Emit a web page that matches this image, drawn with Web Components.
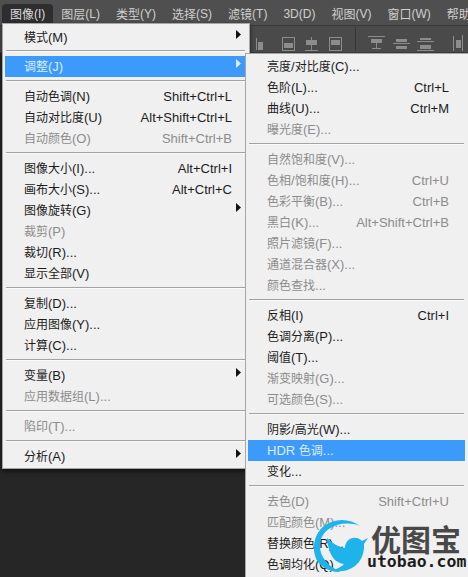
<!DOCTYPE html>
<html lang="zh-CN"><head><meta charset="utf-8"><style>
html,body{margin:0;padding:0;background:#262626;height:577px;overflow:hidden}
</style></head><body>
<ps-app>
<ps-menubar slot="bar"></ps-menubar>
<ps-toolbar slot="tool"></ps-toolbar>
<ps-menu slot="left" kind="left">
<ps-item label="模式(M)" more></ps-item>
<ps-sep short></ps-sep>
<ps-item label="调整(J)" more on></ps-item>
<ps-sep></ps-sep>
<ps-item label="自动色调(N)" key="Shift+Ctrl+L"></ps-item>
<ps-item label="自动对比度(U)" key="Alt+Shift+Ctrl+L"></ps-item>
<ps-item label="自动颜色(O)" key="Shift+Ctrl+B" off></ps-item>
<ps-sep></ps-sep>
<ps-item label="图像大小(I)..." key="Alt+Ctrl+I"></ps-item>
<ps-item label="画布大小(S)..." key="Alt+Ctrl+C"></ps-item>
<ps-item label="图像旋转(G)" more></ps-item>
<ps-item label="裁剪(P)" off></ps-item>
<ps-item label="裁切(R)..."></ps-item>
<ps-item label="显示全部(V)"></ps-item>
<ps-sep></ps-sep>
<ps-item label="复制(D)..."></ps-item>
<ps-item label="应用图像(Y)..."></ps-item>
<ps-item label="计算(C)..."></ps-item>
<ps-sep></ps-sep>
<ps-item label="变量(B)" more></ps-item>
<ps-item label="应用数据组(L)..." off></ps-item>
<ps-sep></ps-sep>
<ps-item label="陷印(T)..." off></ps-item>
<ps-sep></ps-sep>
<ps-item label="分析(A)" more></ps-item>
</ps-menu>
<ps-menu slot="right" kind="right">
<ps-item label="亮度/对比度(C)..."></ps-item>
<ps-item label="色阶(L)..." key="Ctrl+L"></ps-item>
<ps-item label="曲线(U)..." key="Ctrl+M"></ps-item>
<ps-item label="曝光度(E)..." off></ps-item>
<ps-sep></ps-sep>
<ps-item label="自然饱和度(V)..." off></ps-item>
<ps-item label="色相/饱和度(H)..." key="Ctrl+U" off></ps-item>
<ps-item label="色彩平衡(B)..." key="Ctrl+B" off></ps-item>
<ps-item label="黑白(K)..." key="Alt+Shift+Ctrl+B" off></ps-item>
<ps-item label="照片滤镜(F)..." off></ps-item>
<ps-item label="通道混合器(X)..." off></ps-item>
<ps-item label="颜色查找..." off></ps-item>
<ps-sep></ps-sep>
<ps-item label="反相(I)" key="Ctrl+I"></ps-item>
<ps-item label="色调分离(P)..."></ps-item>
<ps-item label="阈值(T)..."></ps-item>
<ps-item label="渐变映射(G)..." off></ps-item>
<ps-item label="可选颜色(S)..." off></ps-item>
<ps-sep></ps-sep>
<ps-item label="阴影/高光(W)..."></ps-item>
<ps-item label="HDR 色调..." on></ps-item>
<ps-item label="变化..."></ps-item>
<ps-sep></ps-sep>
<ps-item label="去色(D)" key="Shift+Ctrl+U" off></ps-item>
<ps-item label="匹配颜色(M)..." off></ps-item>
<ps-item label="替换颜色(R)..."></ps-item>
<ps-item label="色调均化(Q)"></ps-item>
</ps-menu>
<ps-logo slot="logo"></ps-logo>
</ps-app>
<script>
const FONT='"Liberation Sans","Noto Sans CJK SC",sans-serif';
const cjk=s=>s.replace(/[\u3000-\u9fff]+/g,m=>`<span class="c">${m}</span>`);

customElements.define('ps-app',class extends HTMLElement{
  constructor(){super();this.attachShadow({mode:'open'}).innerHTML=`<style>
:host{display:block;position:relative;width:468px;height:577px;overflow:hidden;background:#262626;font-family:${FONT}}
.l{position:absolute;left:2px;top:23px;width:248px}
.r{position:absolute;left:245px;top:53px;width:223px;height:524px;overflow:hidden}
.lg{position:absolute;left:312px;top:516px}
</style><slot name="bar"></slot><slot name="tool"></slot>
<div class="l"><slot name="left"></slot></div>
<div class="r"><slot name="right"></slot></div>
<div class="lg"><slot name="logo"></slot></div>`;}
});

customElements.define('ps-menubar',class extends HTMLElement{
  constructor(){super();
    const items=[['图像','(I)',1],['图层','(L)'],['类型','(Y)'],['选择','(S)'],['滤镜','(T)'],['','3D(D)'],['视图','(V)'],['窗口','(W)'],['帮助','']];
    this.attachShadow({mode:'open'}).innerHTML=`<style>
:host{display:flex;height:25px;background:#4f4f4f;color:#cfcfcf;font-size:12px;padding-left:2px;white-space:nowrap;overflow:hidden;box-sizing:border-box}
.m{display:flex;align-items:center;padding:0 8px;margin-top:4px;height:19px}
.m.a{background:#2e2e2e;color:#dcdcdc;border-radius:4px 4px 0 0}
</style>`+items.map(i=>`<div class="m ${i[2]?'a':''}"><span>${i[0]}</span>${i[1]}</div>`).join('');}
});

customElements.define('ps-toolbar',class extends HTMLElement{
  constructor(){super();
    const g=(x,d)=>`<path transform="translate(${x} 0)" d="${d}"/>`;
    this.attachShadow({mode:'open'}).innerHTML=`<style>
:host{display:block;height:28px;background:#4a4a4a;box-sizing:border-box;border-top:1px solid #383838;border-bottom:1px solid #3a3a3a}
svg{display:block;width:468px;height:26px}
</style><svg viewBox="0 2 468 26"><g fill="#8c8c8c">
${g(250,'M6 14h1v12H6zM8 18h5v8H8z')}
${g(282,'M0 13h13v1H0zM0 13h1v14H0zM12 13h1v14h-1zM0 26h13v1H0zM2 19h9v5H2z')}
${g(305,'M6 13h1v14H6zM1 16h11v5H1zM0 26h13v1H0z')}
${g(329,'M0 13h13v1H0zM0 13h1v14H0zM12 13h1v14h-1zM0 26h13v1H0zM2 16h9v5H2z')}
${g(368,'M0 12h17v1H0zM3 15h11v4H3zM8 19h1v5H8zM4 24h9v1H4z')}
${g(393,'M0 19h17v1H0zM3 15h11v3H3zM3 22h11v3H3z')}
${g(417,'M0 17h17v1H0zM3 21h11v4H3zM0 26h17v1H0zM3 14h11v2H3z')}
${g(452,'M1 12h1v15H1zM4 16h5v8H4zM10 11h1v16h-1z')}
</g><rect x="355" y="3" width="1" height="24" fill="#363636"/></svg>`;}
});

customElements.define('ps-menu',class extends HTMLElement{
  constructor(){super();this.attachShadow({mode:'open'}).innerHTML=`<style>
:host{display:flex;flex-direction:column;background:#f0f0f0;box-sizing:border-box;border:1px solid #a6a6a6;padding:2px 3px 2px 2px;color:#1c1c1c;font-size:13px;box-shadow:0 2px 4px rgba(0,0,0,.6);--kr:16px}
:host([kind=left]){padding-top:3px;padding-bottom:1px;--kr:14px}
:host([kind=right]){border-right:0;border-bottom:0}
</style><slot></slot>`;}
});

customElements.define('ps-item',class extends HTMLElement{
  connectedCallback(){
    if(this.shadowRoot)return;
    const key=this.getAttribute('key');
    const more=this.hasAttribute('more');
    const root=this.attachShadow({mode:'open'});
    root.innerHTML=`<style>
:host{display:flex;align-items:center;height:21px;padding:0 var(--kr) 0 19px;white-space:nowrap;line-height:21px}
:host([off]){color:#8c8c8c}
:host([on]){background:#3c9afa;color:#dcecff}
:host([more]){padding-right:5px}
.c{font-size:12px}
.k{margin-left:auto}
svg{margin-left:auto;margin-bottom:6px;width:5px;height:9px;display:block}
</style><span>${cjk(this.getAttribute('label')||'')}</span>`+
    (key?`<span class="k">${key}</span>`:'')+
    (more?`<svg viewBox="0 0 5 9"><path d="M0 0l5 4.5L0 9z" fill="${this.hasAttribute('on')?'#dcecff':'#111'}"/></svg>`:'');
  }
});

customElements.define('ps-sep',class extends HTMLElement{
  constructor(){super();this.attachShadow({mode:'open'}).innerHTML=`<style>
:host{display:block;height:9px;box-sizing:border-box;padding:3px 1px 0}
:host([short]){height:8px;padding-top:2px}
div{height:1px;background:#a2a2a2;box-shadow:0 1px 0 #fafafa}
</style><div></div>`;}
});

customElements.define('ps-logo',class extends HTMLElement{
  constructor(){super();this.attachShadow({mode:'open'}).innerHTML=`<style>
:host{display:flex;width:156px;height:61px;font-family:"Noto Sans CJK SC",sans-serif}
svg{display:block;width:55px;height:61px;flex:none;overflow:visible}
.t{display:flex;flex-direction:column;padding-top:7px}
.a{font-size:30px;font-weight:700;line-height:30px;color:#484848;margin-left:4px;white-space:nowrap}
.b{font:700 16.5px/17px "DejaVu Sans Mono",monospace;color:#1d1d1d;white-space:nowrap}
</style><svg viewBox="0 0 55 61"><g fill="#1fb3ec">
<path d="M48 10C38 2 22 2 12 10C-1 20-1 42 10 50C15 54 21 56 28 56C22 52 16 49 13 44C5 34 7 19 17 13C26 7 38 6 48 10z"/>
<path d="M15 22C21 28 27 31 33 32C33 26 38 21 44 22C47 22 49 24 50 25L56 22L52 28C53 42 44 54 30 55C26 56 22 55 20 54C26 53 30 50 32 48C24 47 19 41 17 33C16 29 15 26 15 22z"/>
</g></svg><div class="t"><div class="a">优图宝</div><div class="b">utobao.com</div></div>`;}
});
</script>
</body></html>
